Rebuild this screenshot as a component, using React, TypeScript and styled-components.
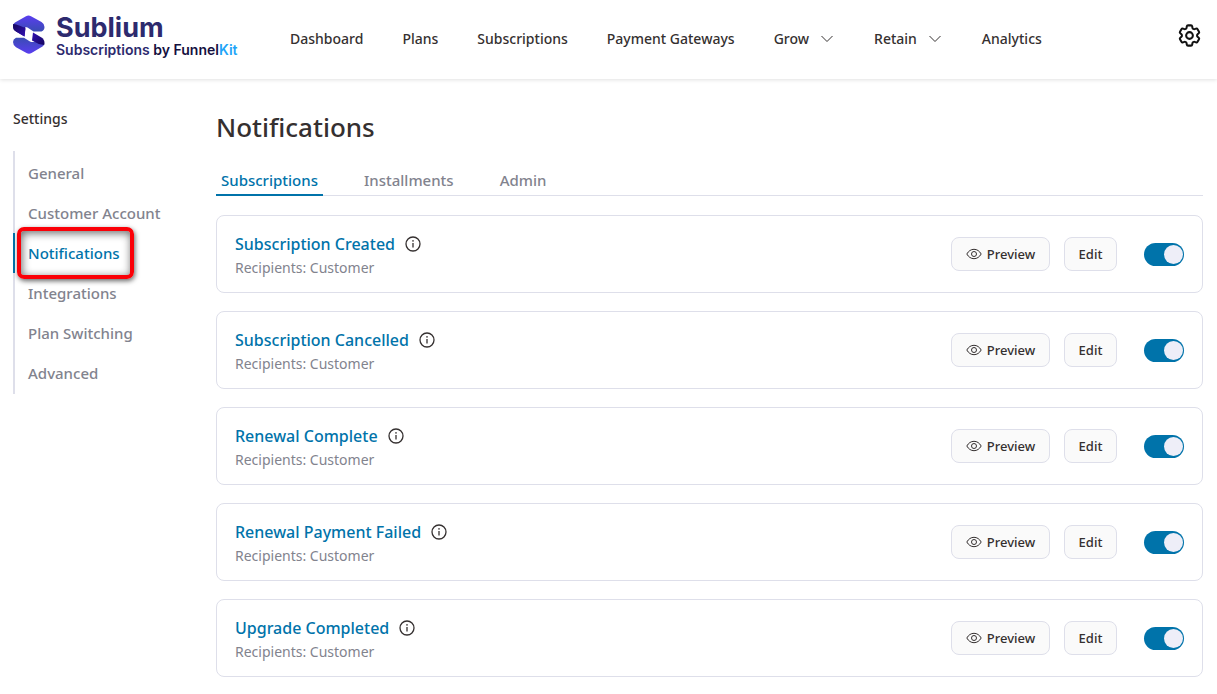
import React from "react";
import styled, { createGlobalStyle, css } from "styled-components";
import { HiOutlineCog6Tooth } from "react-icons/hi2";

const color = {
  primary: "#0073aa",
  text: "#353030",
  muted: "#82838e",
  border: "#dedfea",
  knob: "#eeeef8",
  button: "#fafafa",
};

const GlobalStyle = createGlobalStyle`
  *, *::before, *::after { box-sizing: border-box; }
  body {
    margin: 0;
    background: #fff;
    color: ${color.text};
    font-family: "Segoe UI", "Noto Sans", sans-serif;
    font-size: 14px;
  }
  ul, h1, h2, p { margin: 0; padding: 0; }
  ul { list-style: none; }
  a { color: inherit; text-decoration: none; }
  button { font: inherit; color: inherit; cursor: pointer; }
`;

const Header = styled.header`
  display: flex;
  align-items: center;
  height: 79px;
  padding: 0 14px 0 13px;
  box-shadow: 0 1px 4px rgba(0, 0, 0, 0.12);
`;

const Brand = styled.a`
  display: flex;
  align-items: center;
  gap: 11px;
  width: 277px;
  flex: none;
  padding-bottom: 9px;
  font-family: Inter, sans-serif;
  color: #2d2a6e;
`;

const BrandText = styled.span`
  display: flex;
  flex-direction: column;
  padding-top: 2px;
  white-space: nowrap;
`;

const BrandName = styled.span`
  font-size: 27px;
  line-height: 26px;
  font-weight: 700;
`;

const BrandTagline = styled.span`
  font-size: 14px;
  line-height: 17px;
  font-weight: 600;
`;

const Navy = styled.span`
  color: #14103f;
`;

const Sky = styled.span`
  color: #1fa5f8;
`;

const MainNav = styled.nav`
  display: flex;
  align-items: center;
  gap: 39px;
  flex: 1;
  padding-bottom: 2px;
  font-weight: 500;
  line-height: 20px;
  white-space: nowrap;
`;

const navItem = css`
  display: inline-flex;
  align-items: center;
  gap: 12px;
  border: 0;
  background: none;
`;

const NavLink = styled.a`
  ${navItem}
`;

const NavMenu = styled.button`
  ${navItem}
  padding: 0 2px 0 0;
`;

const IconButton = styled.button`
  display: flex;
  padding: 0 0 8px;
  border: 0;
  background: none;
  color: #111;
  font-size: 27px;

  path {
    stroke-width: 1.8;
  }
`;

const Page = styled.div`
  display: grid;
  grid-template-columns: 203px minmax(0, 1fr);
  padding: 30px 14px 16px 13px;
`;

const Sidebar = styled.aside`
  font-weight: 500;
`;

const SidebarTitle = styled.h2`
  font-size: 14px;
  line-height: 20px;
  font-weight: 500;
`;

const SidebarList = styled.ul`
  margin-top: 22px;
  padding: 2px 0 1px;
  border-left: 2px solid ${color.border};
`;

const SidebarItem = styled.li`
  position: relative;
`;

const SidebarLink = styled.a<{ $active: boolean }>`
  display: block;
  margin-left: -2px;
  padding-left: 13px;
  border-left: 2px solid ${(p) => (p.$active ? color.primary : "transparent")};
  color: ${(p) => (p.$active ? color.primary : color.muted)};
  font-size: 15px;
  line-height: 40px;
`;

const Callout = styled.span`
  position: absolute;
  top: -6px;
  left: 2px;
  width: 117px;
  height: 52px;
  border: 4px solid #fb0007;
  border-radius: 7px;
  box-shadow: 1px 2px 5px rgba(0, 0, 0, 0.6), inset 1px 2px 8px rgba(0, 0, 0, 0.6);
  pointer-events: none;
`;

const PageTitle = styled.h1`
  font-size: 26px;
  line-height: 36px;
  font-weight: 500;
`;

const Tabs = styled.div`
  display: flex;
  gap: 36px;
  margin-top: 22px;
  border-bottom: 1px solid ${color.border};
`;

const Tab = styled.button<{ $active: boolean }>`
  margin-bottom: -1px;
  padding: 0 5px;
  border: 0;
  border-bottom: 2px solid ${(p) => (p.$active ? color.primary : "transparent")};
  background: none;
  color: ${(p) => (p.$active ? color.primary : color.muted)};
  font-size: 15px;
  line-height: 27px;
  font-weight: 500;
`;

const CardList = styled.ul`
  display: grid;
  gap: 18px;
  margin-top: 19px;
`;

const Card = styled.li`
  display: flex;
  align-items: center;
  padding: 0 18px;
  border: 1px solid ${color.border};
  border-radius: 8px;
`;

const CardBody = styled.div`
  flex: 1;
  min-width: 0;
  padding: 16px 0 12px;
`;

const CardHeading = styled.div`
  display: flex;
  align-items: center;
  gap: 10px;
  line-height: 24px;
`;

const CardTitle = styled.a`
  color: ${color.primary};
  font-size: 16px;
  font-weight: 500;
`;

const InfoButton = styled.button`
  display: flex;
  padding: 0;
  border: 0;
  background: none;
`;

const Recipients = styled.p`
  color: ${color.muted};
  line-height: 24px;
`;

const Actions = styled.div`
  display: flex;
  align-items: center;
  gap: 14px;
`;

const ActionButton = styled.button<{ $wide?: boolean }>`
  display: inline-flex;
  align-items: center;
  justify-content: center;
  gap: 5px;
  width: ${(p) => (p.$wide ? 99 : 53)}px;
  height: 34px;
  padding: 0;
  border: 1px solid ${color.border};
  border-radius: 8px;
  background: ${color.button};
  font-size: 13px;
  font-weight: 500;
`;

const Switch = styled.input`
  appearance: none;
  display: flex;
  align-items: center;
  width: 40px;
  height: 23px;
  margin: 0 0 0 13px;
  padding: 0 1px;
  border-radius: 12px;
  background: #b9bac6;
  cursor: pointer;

  &::before {
    content: "";
    width: 19px;
    height: 19px;
    border-radius: 50%;
    background: ${color.knob};
  }

  &:checked {
    justify-content: flex-end;
    background: ${color.primary};
  }
`;

const LogoMark = () => (
  <svg width="32" height="40" viewBox="0 0 32 40" aria-hidden="true">
    <defs>
      <linearGradient id="bandTop" x1="0" y1="0" x2="0" y2="1">
        <stop offset="0" stopColor="#5a3df0" />
        <stop offset="1" stopColor="#3a4cb4" />
      </linearGradient>
      <linearGradient id="bandBottom" x1="0" y1="0" x2="0" y2="1">
        <stop offset="0" stopColor="#3a4cb4" />
        <stop offset="1" stopColor="#5a3df0" />
      </linearGradient>
      <linearGradient id="foldLeft" x1="0" y1="0" x2="1" y2="1">
        <stop offset="0" stopColor="#14065c" />
        <stop offset="1" stopColor="#3210b4" />
      </linearGradient>
      <linearGradient id="foldRight" x1="0" y1="0" x2="1" y2="1">
        <stop offset="0" stopColor="#3210b4" />
        <stop offset="1" stopColor="#14065c" />
      </linearGradient>
    </defs>
    <path d="M0.300 9L12.500 11L11.500 21.500L3 16.500Q0 14.500 0 11Z" fill="url(#foldLeft)" />
    <path d="M2 7.500L13 1.200Q15.500 0 18 1.200L28.500 7Q31.500 8.800 31.500 12Q31.500 15 28.500 16.500H20.500L14.500 12.500Q12 11.500 9.500 13L4.500 16Q0.500 13.500 0.300 10.500Q0.300 8.500 2 7.500Z" fill="url(#bandTop)" />
    <path d="M0.300 9Q6 9.500 12.500 13.500L11.500 21.500L3 16.500Q0 14.500 0 11Z" fill="url(#foldLeft)" />
    <path d="M29.500 31.500L18.500 38Q16 39.300 13.500 38L3 32.200Q0 30.300 0 27Q0 24.300 3 22.800H11L17 26.500Q19.500 27.800 22 26.200L27 23Q31 25.500 31.200 28.500Q31.200 30.500 29.500 31.500Z" fill="url(#bandBottom)" />
    <path d="M31.200 30Q25 29.500 19 25.500L20 17.500L28.500 22.500Q31.500 24.500 31.500 28Z" fill="url(#foldRight)" />
  </svg>
);

const Chevron = () => (
  <svg width="12" height="8" viewBox="0 0 12 8" fill="none" stroke="currentColor" aria-hidden="true">
    <path d="M0.500 1L6 6.500L11.500 1" />
  </svg>
);

const InfoIcon = () => (
  <svg width="16" height="16" viewBox="0 0 16 16" fill="none" stroke="currentColor" strokeWidth="1.300" aria-hidden="true">
    <circle cx="8" cy="8" r="7" />
    <path d="M8 7V11.500" />
    <circle cx="8" cy="4.900" r="0.800" fill="currentColor" stroke="none" />
  </svg>
);

const EyeIcon = () => (
  <svg width="16" height="12" viewBox="0 0 16 12" fill="none" stroke="currentColor" aria-hidden="true">
    <path d="M0.800 6C2.500 3 5 1.300 8 1.300S13.500 3 15.200 6C13.500 9 11 10.700 8 10.700S2.500 9 0.800 6Z" />
    <circle cx="8" cy="6" r="2.500" />
  </svg>
);

const navItems = [
  { label: "Dashboard" },
  { label: "Plans" },
  { label: "Subscriptions" },
  { label: "Payment Gateways" },
  { label: "Grow", menu: true },
  { label: "Retain", menu: true },
  { label: "Analytics" },
];

const settings = ["General", "Customer Account", "Notifications", "Integrations", "Plan Switching", "Advanced"];

const tabs = ["Subscriptions", "Installments", "Admin"];

const notifications = [
  "Subscription Created",
  "Subscription Cancelled",
  "Renewal Complete",
  "Renewal Payment Failed",
  "Upgrade Completed",
];

function NotificationCard({ title }: { title: string }) {
  return (
    <Card>
      <CardBody>
        <CardHeading>
          <CardTitle href="#">{title}</CardTitle>
          <InfoButton aria-label={`About ${title}`}>
            <InfoIcon />
          </InfoButton>
        </CardHeading>
        <Recipients>Recipients: Customer</Recipients>
      </CardBody>
      <Actions>
        <ActionButton $wide>
          <EyeIcon />
          Preview
        </ActionButton>
        <ActionButton>Edit</ActionButton>
        <Switch type="checkbox" role="switch" aria-label={title} defaultChecked />
      </Actions>
    </Card>
  );
}

export default function App() {
  return (
    <>
      <GlobalStyle />
      <Header>
        <Brand href="#">
          <LogoMark />
          <BrandText>
            <BrandName>Sublium</BrandName>
            <BrandTagline>
              Subscriptions <Navy>by Funnel</Navy>
              <Sky>Kit</Sky>
            </BrandTagline>
          </BrandText>
        </Brand>
        <MainNav aria-label="Main">
          {navItems.map(({ label, menu }) =>
            menu ? (
              <NavMenu key={label} aria-haspopup="menu">
                {label}
                <Chevron />
              </NavMenu>
            ) : (
              <NavLink key={label} href="#">
                {label}
              </NavLink>
            )
          )}
        </MainNav>
        <IconButton aria-label="Settings">
          <HiOutlineCog6Tooth />
        </IconButton>
      </Header>
      <Page>
        <Sidebar>
          <SidebarTitle>Settings</SidebarTitle>
          <SidebarList>
            {settings.map((label) => {
              const active = label === "Notifications";
              return (
                <SidebarItem key={label}>
                  <SidebarLink href="#" $active={active} aria-current={active ? "page" : undefined}>
                    {label}
                  </SidebarLink>
                  {active && <Callout />}
                </SidebarItem>
              );
            })}
          </SidebarList>
        </Sidebar>
        <main>
          <PageTitle>Notifications</PageTitle>
          <Tabs role="tablist">
            {tabs.map((label, i) => (
              <Tab key={label} role="tab" $active={i === 0} aria-selected={i === 0}>
                {label}
              </Tab>
            ))}
          </Tabs>
          <CardList>
            {notifications.map((title) => (
              <NotificationCard key={title} title={title} />
            ))}
          </CardList>
        </main>
      </Page>
    </>
  );
}
